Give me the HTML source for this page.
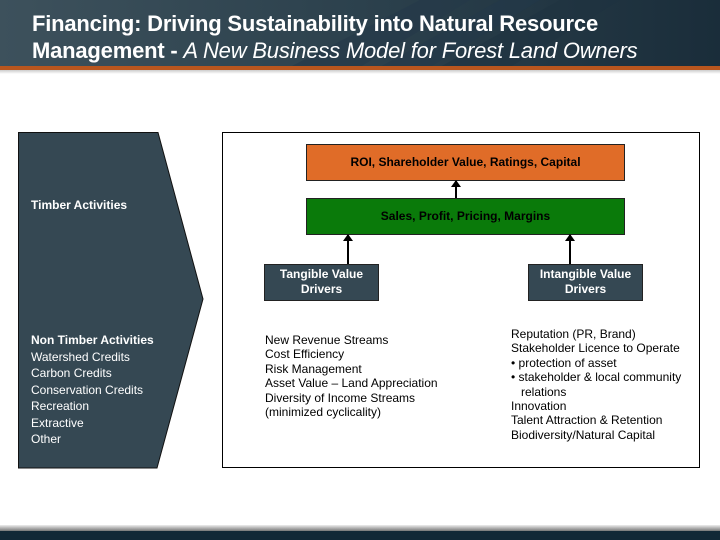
<!DOCTYPE html>
<html><head><meta charset="utf-8"><style>
*{margin:0;padding:0;box-sizing:border-box}
body{width:720px;height:540px;position:relative;background:#fff;font-family:"Liberation Sans",Arial,sans-serif;overflow:hidden}
.hdr{position:absolute;left:0;top:0;width:720px;height:67px;background:linear-gradient(90deg,#3d515c 0%,#2c414d 50%,#1a2d3a 100%);overflow:hidden}
.hdr h1{position:absolute;left:32px;top:10px;color:#fff;font-size:22px;line-height:27px;font-weight:bold;letter-spacing:-0.2px;white-space:nowrap}
.hdr h1 i{font-weight:normal}
.orng{position:absolute;left:0;top:66px;width:720px;height:4px;background:#b9561e}
.shd{position:absolute;left:0;top:70px;width:720px;height:4px;background:linear-gradient(#ccc,#fff)}
.bot{position:absolute;left:0;top:525px;width:720px;height:6px;background:linear-gradient(#eee,#777)}
.bot2{position:absolute;left:0;top:531px;width:720px;height:9px;background:#122836}
.t{position:absolute;font-size:12px;line-height:16.5px;white-space:nowrap}
.w{color:#fff}
.box{position:absolute;text-align:center;font-size:12px;font-weight:bold;border:1px solid #222;white-space:nowrap}
.arr{position:absolute;width:2px;background:#000}
.arr:before{content:"";position:absolute;left:-4px;top:-1px;border-left:5px solid transparent;border-right:5px solid transparent;border-bottom:7px solid #000}
.blk{position:absolute;font-size:12px;line-height:14.4px;color:#000;white-space:nowrap}
</style></head><body>
<div class="hdr">
<svg width="720" height="67" style="position:absolute;left:0;top:0"><polygon points="290,67 420,0 470,0 360,67" fill="#24394a" opacity=".6"/><polygon points="380,67 500,0 540,0 430,67" fill="#22384a" opacity=".5"/><polygon points="440,67 560,0 620,0 510,67" fill="#1d3140" opacity=".5"/></svg>
<h1>Financing: Driving Sustainability into Natural Resource<br>Management - <i>A New Business Model for Forest Land Owners</i></h1>
</div>
<div class="orng"></div><div class="shd"></div>
<svg width="720" height="540" style="position:absolute;left:0;top:0">
<polygon points="18.5,132.5 158,132.5 203,299 157,468 18.5,468" fill="#354853" stroke="#111" stroke-width="1"/>
<rect x="222.5" y="132.5" width="477" height="335" fill="#fff" stroke="#000"/>
</svg>
<div class="t w" style="left:31px;top:197px;font-weight:bold">Timber Activities</div>
<div class="t w" style="left:31px;top:332px"><b>Non Timber Activities</b><br>Watershed Credits<br>Carbon Credits<br>Conservation Credits<br>Recreation<br>Extractive<br>Other</div>
<div class="box" style="left:306px;top:144px;width:319px;height:37px;background:#e06c28;line-height:35px">ROI, Shareholder Value, Ratings, Capital</div>
<div class="box" style="left:306px;top:198px;width:319px;height:37px;background:#0a7a0a;line-height:35px">Sales, Profit, Pricing, Margins</div>
<div class="arr" style="left:455px;top:181px;height:17px"></div>
<div class="arr" style="left:347px;top:235px;height:29px"></div>
<div class="arr" style="left:569px;top:235px;height:29px"></div>
<div class="box" style="left:264px;top:264px;width:115px;height:37px;background:#354853;color:#fff;line-height:15px;padding-top:2px">Tangible Value<br>Drivers</div>
<div class="box" style="left:528px;top:264px;width:115px;height:37px;background:#354853;color:#fff;line-height:15px;padding-top:2px">Intangible Value<br>Drivers</div>
<div class="blk" style="left:265px;top:333px">New Revenue Streams<br>Cost Efficiency<br>Risk Management<br>Asset Value – Land Appreciation<br>Diversity of Income Streams<br>(minimized cyclicality)</div>
<div class="blk" style="left:511px;top:327px">Reputation (PR, Brand)<br>Stakeholder Licence to Operate<br>• protection of asset<br>• stakeholder &amp; local community<br>&nbsp;&nbsp;&nbsp;relations<br>Innovation<br>Talent Attraction &amp; Retention<br>Biodiversity/Natural Capital</div>
<div class="bot"></div><div class="bot2"></div>
</body></html>
